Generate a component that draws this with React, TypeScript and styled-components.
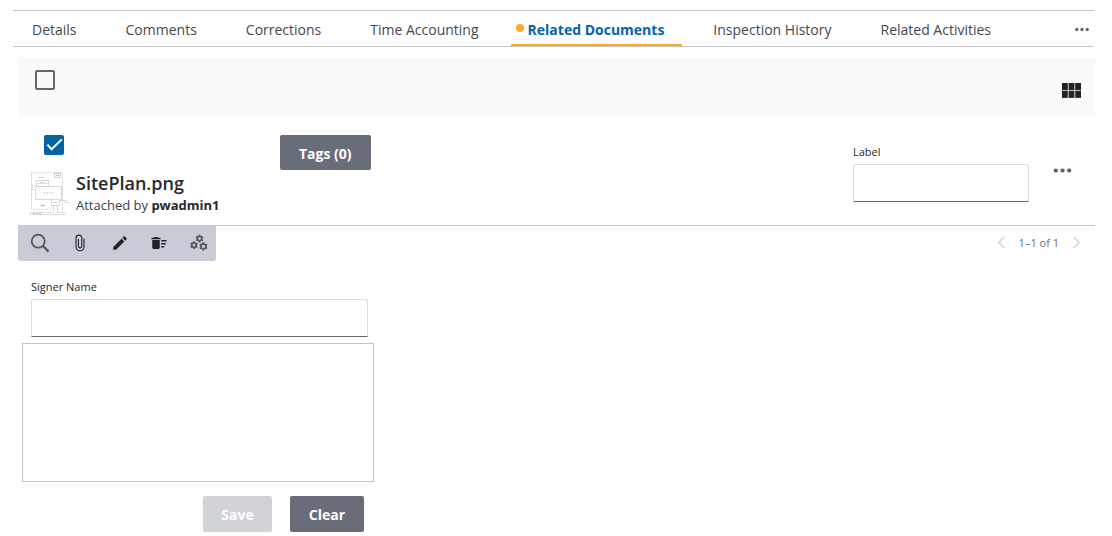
import React, { useState } from "react";
import styled, { createGlobalStyle, css } from "styled-components";
import { MdEdit, MdDeleteSweep } from "react-icons/md";

const GlobalStyle = createGlobalStyle`
  *, *::before, *::after { box-sizing: border-box; }
  body {
    margin: 0;
    background: #fff;
    color: #26292e;
    font-family: "Open Sans", "Noto Sans", sans-serif;
    font-size: 14px;
  }
  button, input { font: inherit; color: inherit; }
`;

const Page = styled.div`
  padding-top: 10px;
`;

const TabBar = styled.nav`
  display: flex;
  align-items: stretch;
  justify-content: space-between;
  height: 37px;
  margin: 0 18px 11px 13px;
  border-top: 1px solid #c3c4c6;
  border-bottom: 1px solid #c3c4c6;
`;

const TabList = styled.div`
  display: flex;
  gap: 14px;
  padding-left: 2px;
`;

const Tab = styled.button<{ $active?: boolean }>`
  position: relative;
  padding: 4px 18px 0 17px;
  border: 0;
  border-bottom: 2px solid transparent;
  background: none;
  color: #44484d;
  line-height: 20px;
  white-space: nowrap;
  cursor: pointer;
  ${(p) =>
    p.$active &&
    css`
      border-bottom-color: #fbab24;
      color: #0563a5;
      font-weight: 700;
    `}
`;

const TabDot = styled.span`
  position: absolute;
  top: 13px;
  left: 5px;
  width: 8px;
  height: 8px;
  border-radius: 50%;
  background: #fbab24;
`;

const IconButton = styled.button`
  display: flex;
  align-items: center;
  justify-content: center;
  padding: 0;
  border: 0;
  background: none;
  cursor: pointer;
  svg { display: block; }
`;

const MoreTabs = styled(IconButton)`
  padding: 2px 5px 0;
  color: #63666a;
`;

const Content = styled.main`
  margin: 0 17px 0 18px;
`;

const SelectBar = styled.header`
  display: flex;
  justify-content: space-between;
  height: 59px;
  padding: 12px 14px 19px 17px;
  background: #fafafa;
`;

const GridButton = styled(IconButton)`
  align-self: flex-end;
  color: #202429;
`;

const CheckLabel = styled.label`
  display: grid;
  width: 20px;
  height: 20px;
  cursor: pointer;
  > * { grid-area: 1 / 1; }
  svg { pointer-events: none; color: #fff; }
  input:not(:checked) + svg { visibility: hidden; }
`;

const CheckInput = styled.input`
  appearance: none;
  width: 20px;
  height: 20px;
  margin: 0;
  border: 2px solid #65676b;
  border-radius: 2px;
  &:checked {
    border-color: #0563a5;
    background: #0563a5;
  }
`;

const Row = styled.article`
  display: flex;
  align-items: flex-start;
  height: 109px;
  padding: 18px 23px 0 10px;
  border-bottom: 1px solid #c3c4c6;
`;

const FileCell = styled.div`
  width: 252px;
  > label { margin-left: 16px; }
`;

const FileInfo = styled.div`
  display: flex;
  gap: 4px;
  margin-top: 16px;
`;

const FileName = styled.h2`
  margin: 0;
  font-size: 18px;
  font-weight: 600;
  line-height: 24px;
`;

const Attached = styled.p`
  margin: 0;
  color: #3c4045;
  font-size: 13px;
  line-height: 20px;
  strong { color: #26292e; font-weight: 700; }
`;

const Button = styled.button<{ $height?: number }>`
  height: ${(p) => p.$height ?? 36}px;
  padding: 1px 19px 0;
  border: 0;
  border-radius: 2px;
  background: #696d79;
  color: #fff;
  font-weight: 700;
  cursor: pointer;
  &:disabled {
    padding: 1px 18px 0;
    background: #d2d3d7;
    cursor: default;
  }
`;

const RowEnd = styled.div`
  display: flex;
  align-items: flex-start;
  gap: 24px;
  margin-left: auto;
  padding-top: 8px;
`;

const RowMore = styled(IconButton)`
  margin-top: 25px;
  color: #5c5f63;
`;

const Field = styled.div<{ $width: number }>`
  display: flex;
  flex-direction: column;
  gap: 3px;
  width: ${(p) => p.$width}px;
  max-width: 100%;
`;

const FieldLabel = styled.label`
  font-size: 11px;
  line-height: 18px;
`;

const TextInput = styled.input`
  width: 100%;
  height: 38px;
  padding: 0 8px;
  border: 1px solid #dcdcde;
  border-bottom-color: #65676b;
  border-radius: 3px 3px 0 0;
  background: #fff;
`;

const ToolRow = styled.div`
  display: flex;
  align-items: center;
  justify-content: space-between;
`;

const Toolbar = styled.div`
  display: flex;
  justify-content: space-between;
  width: 198px;
  height: 35px;
  padding: 0 7px 2px 12px;
  border-radius: 0 0 3px 3px;
  background: #c9cbd6;
`;

const Tool = styled(IconButton)`
  width: 20px;
  color: #202429;
`;

const Pager = styled.div`
  display: flex;
  align-items: center;
  gap: 13px;
  padding: 0 14px 2px 0;
  color: #696d79;
  font-size: 11px;
  button { color: #d8d9db; }
`;

const SignForm = styled.form`
  width: 356px;
  max-width: 100%;
  padding: 17px 0 0 4px;
`;

const SignField = styled.div`
  padding: 0 6px 6px 9px;
`;

const SignaturePad = styled.div`
  height: 139px;
  border: 1px solid #c3c4c6;
`;

const Actions = styled.div`
  display: flex;
  justify-content: flex-end;
  gap: 18px;
  padding: 14px 10px 4px;
`;

const DotsIcon = ({ width }: { width: number }) => (
  <svg width={width} height="5" viewBox="0 0 18 5" fill="currentColor" aria-hidden="true">
    <circle cx="2.3" cy="2.5" r="2.1" />
    <circle cx="9" cy="2.5" r="2.1" />
    <circle cx="15.7" cy="2.5" r="2.1" />
  </svg>
);

const GridIcon = () => (
  <svg width="19" height="15" viewBox="0 0 19 15" fill="currentColor" aria-hidden="true">
    {[0, 6.6, 13.2].map((x) =>
      [0, 7.8].map((y) => <rect key={`${x}-${y}`} x={x} y={y} width="5.8" height="7.1" />)
    )}
  </svg>
);

const SearchIcon = () => (
  <svg width="20" height="20" viewBox="0 0 20 20" fill="none" stroke="#55585e" aria-hidden="true">
    <circle cx="8.2" cy="8.2" r="6.5" strokeWidth="1.8" />
    <path d="M13 13l5.6 5.600" strokeWidth="2.2" />
  </svg>
);

const ClipIcon = () => (
  <svg width="10" height="18" viewBox="0 0 10 18" fill="none" stroke="currentColor" strokeWidth="1.1" aria-hidden="true">
    <path d="M9 4.500V12.800a4 4 0 0 1-8 0V4a2.900 2.900 0 0 1 5.800 0V12.300a1.700 1.700 0 0 1-3.400 0V5" />
  </svg>
);

const Gear = ({ x, y, r }: { x: number; y: number; r: number }) => (
  <g transform={`translate(${x} ${y})`}>
    <circle r={r} strokeWidth="1.7" />
    {[0, 60, 120, 180, 240, 300].map((a) => (
      <path key={a} d={`M0 ${-r}V${-r - 1.7}`} strokeWidth="1.800" transform={`rotate(${a})`} />
    ))}
  </g>
);

const GearsIcon = () => (
  <svg width="20" height="18" viewBox="0 0 20 18" fill="none" stroke="#55585e" aria-hidden="true">
    <Gear x={10.5} y={4.6} r={2.2} />
    <Gear x={5} y={11.2} r={2.2} />
    <Gear x={14.4} y={12.4} r={2.5} />
  </svg>
);

const CheckIcon = () => (
  <svg width="20" height="20" viewBox="0 0 20 20" fill="none" stroke="currentColor" strokeWidth="2" aria-hidden="true">
    <path d="M3.4 9.600l4.200 4.600L17.800 4.400" />
  </svg>
);

const Chevron = ({ d }: { d: string }) => (
  <svg width="9" height="13" viewBox="0 0 9 13" fill="none" stroke="currentColor" strokeWidth="1.8" aria-hidden="true">
    <path d={d} />
  </svg>
);

const PlanThumb = () => (
  <svg width="44" height="44" viewBox="0 0 44 44" fill="none" stroke="#cfcfcf" strokeWidth="0.8" role="img" aria-label="Site plan preview">
    <path d="M3.500 1.500H34.500M34.500 1.500V39" stroke="#dedede" />
    <path d="M3.500 1.500V38.500" strokeDasharray="4 1" />
    <path d="M5 38.500H23" stroke="#d8d8d8" strokeDasharray="3 1" />
    <rect x="8.500" y="9.500" width="12" height="6" />
    <path d="M10 12.500H19M12 11.500h5" stroke="#bbb" strokeDasharray="1.500 1" />
    <path d="M10.500 6.500h5" stroke="#a8a8a8" strokeDasharray="2 1" />
    <rect x="26.500" y="2.500" width="6" height="4" stroke="#c4c4c4" />
    <path d="M28 4.500h3" stroke="#b5b5b5" />
    <path d="M7.500 28.500V15.500H33.500V28.500H7.500z" />
    <path d="M15 22h10" stroke="#bdbdbd" strokeDasharray="2 1" />
    <path d="M23.500 28.500V34.500H31.500V28.500M25.500 34.500V42M29.500 34.500V42" />
    <path d="M26 31.500h3M12 34.500h5M15 33v3" stroke="#b5b5b5" />
    <path d="M31 29.500H39M36 31.500h5" stroke="#cfcfcf" />
    <path d="M1 41.500H24M30 41.500H38M1 43.500H38" stroke="#d4d4d4" />
    <path d="M5 42.500h8" stroke="#b0b0b0" strokeDasharray="2 1" />
    <path d="M4.500 14v6M33.500 17v6" stroke="#b8b8b8" strokeDasharray="1 1" />
  </svg>
);

type CheckboxProps = { label: string; checked: boolean; onChange: (v: boolean) => void };

const Checkbox = ({ label, checked, onChange }: CheckboxProps) => (
  <CheckLabel>
    <CheckInput type="checkbox" aria-label={label} checked={checked} onChange={(e) => onChange(e.target.checked)} />
    <CheckIcon />
  </CheckLabel>
);

const tabs = [
  "Details",
  "Comments",
  "Corrections",
  "Time Accounting",
  "Related Documents",
  "Inspection History",
  "Related Activities",
];

export default function App() {
  const [active, setActive] = useState("Related Documents");
  const [all, setAll] = useState(false);
  const [picked, setPicked] = useState(true);
  const [label, setLabel] = useState("");
  const [signer, setSigner] = useState("");

  return (
    <Page>
      <GlobalStyle />
      <TabBar>
        <TabList role="tablist">
          {tabs.map((t) => (
            <Tab key={t} type="button" role="tab" aria-selected={t === active} $active={t === active} onClick={() => setActive(t)}>
              {t === active && <TabDot />}
              {t}
            </Tab>
          ))}
        </TabList>
        <MoreTabs type="button" aria-label="More tabs">
          <DotsIcon width={14} />
        </MoreTabs>
      </TabBar>

      <Content>
        <SelectBar>
          <Checkbox label="Select all" checked={all} onChange={setAll} />
          <GridButton type="button" aria-label="Grid view">
            <GridIcon />
          </GridButton>
        </SelectBar>

        <Row>
          <FileCell>
            <Checkbox label="Select SitePlan.png" checked={picked} onChange={setPicked} />
            <FileInfo>
              <PlanThumb />
              <div>
                <FileName>SitePlan.png</FileName>
                <Attached>
                  Attached by <strong>pwadmin1</strong>
                </Attached>
              </div>
            </FileInfo>
          </FileCell>
          <Button type="button" $height={35}>Tags (0)</Button>
          <RowEnd>
            <Field $width={176}>
              <FieldLabel htmlFor="doc-label">Label</FieldLabel>
              <TextInput id="doc-label" value={label} onChange={(e) => setLabel(e.target.value)} />
            </Field>
            <RowMore type="button" aria-label="More actions">
              <DotsIcon width={19} />
            </RowMore>
          </RowEnd>
        </Row>

        <ToolRow>
          <Toolbar role="toolbar" aria-label="Document actions">
            <Tool type="button" aria-label="Search"><SearchIcon /></Tool>
            <Tool type="button" aria-label="Attach"><ClipIcon /></Tool>
            <Tool type="button" aria-label="Edit"><MdEdit size={18} /></Tool>
            <Tool type="button" aria-label="Delete"><MdDeleteSweep size={18} /></Tool>
            <Tool type="button" aria-label="Settings"><GearsIcon /></Tool>
          </Toolbar>
          <Pager>
            <IconButton type="button" aria-label="Previous page"><Chevron d="M7.500 0.800L1.800 6.500l5.700 5.700" /></IconButton>
            <span>1–1 of 1</span>
            <IconButton type="button" aria-label="Next page"><Chevron d="M1.500 0.800l5.700 5.700-5.700 5.700" /></IconButton>
          </Pager>
        </ToolRow>

        <SignForm onSubmit={(e) => e.preventDefault()}>
          <SignField>
            <Field $width={337}>
              <FieldLabel htmlFor="signer">Signer Name</FieldLabel>
              <TextInput id="signer" value={signer} onChange={(e) => setSigner(e.target.value)} />
            </Field>
          </SignField>
          <SignaturePad role="img" aria-label="Signature" />
          <Actions>
            <Button type="submit" disabled>Save</Button>
            <Button type="button" onClick={() => setSigner("")}>Clear</Button>
          </Actions>
        </SignForm>
      </Content>
    </Page>
  );
}
